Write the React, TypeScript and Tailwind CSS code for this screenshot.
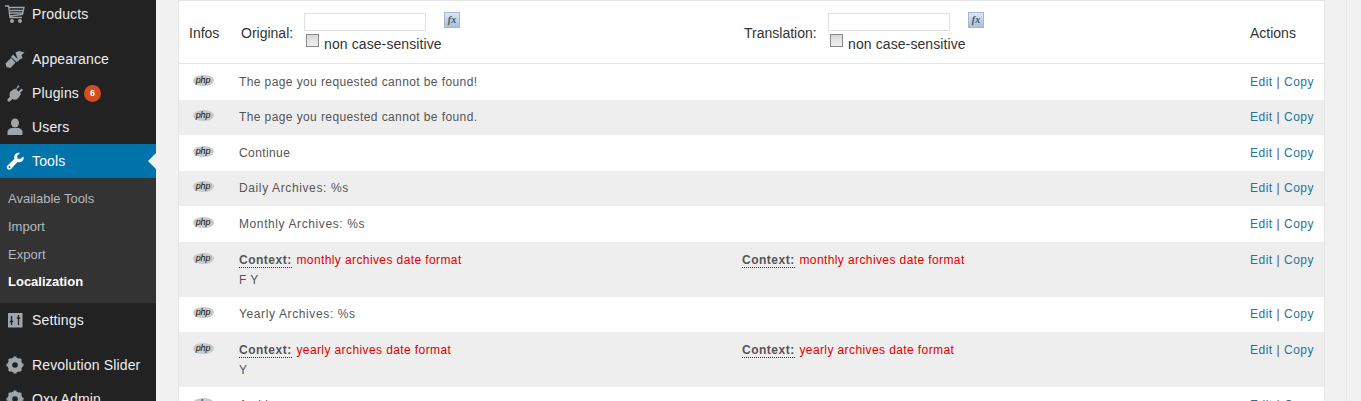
import type { FC, ReactNode } from "react";

const Php: FC = () => (
  <span className="flex justify-center items-center bg-[#c9c9c9] mt-[1px] rounded-[50%] w-[21px] h-[11px] font-['Liberation_Sans'] font-normal text-[#111] text-[9px] italic leading-none tracking-[-0.2px]">
    php
  </span>
);

const Fx: FC = () => (
  <span className="flex justify-center items-center bg-gradient-to-b from-[#dbe6f2] to-[#a9c0da] border border-[#a5b8cf] w-4 h-4 font-['Liberation_Serif'] font-bold text-[#44546a] text-[10px] italic leading-none">
    fx
  </span>
);

const CartIcon = () => (
  <svg viewBox="0 0 20 20" className="w-5 h-5" fill="none" stroke="#a0a5aa" strokeWidth="1.3">
    <path d="M0 2h3.500l1.500 11.500h12M4 3.500h15l-1.500 7L5 12M5 6.500h13M5 9h12.500" />
    <circle cx="7" cy="17" r="1.300" fill="#a0a5aa" />
    <circle cx="15" cy="17" r="1.300" fill="#a0a5aa" />
  </svg>
);

const BrushIcon = () => (
  <svg viewBox="0 0 20 20" className="w-5 h-5" fill="#a0a5aa">
    <path d="M10.500 3.500l3.500-1.500 5.500 1.500-3 2.500 1 3-4.500 2.500zM8 5.500l6 6-2.500 1.500L6 8zM6 9l4.500 4.500-5 5.500-4-1-1-3.500z" />
  </svg>
);

const PlugIcon = () => (
  <svg viewBox="0 0 20 20" className="w-5 h-5" fill="#a0a5aa">
    <path d="M13 2l1.500 1.500-3 3 2 2 3-3L18 7l-3 3 1 1-3 4.500c-2 1.500-4 1.500-5.500.5L4 19l-2-2 3-3.500c-1-1.500-.5-3.500 .5-5L10 5.500l1 1z" />
  </svg>
);

const UserIcon = () => (
  <svg viewBox="0 0 20 20" className="w-5 h-5" fill="#a0a5aa">
    <ellipse cx="10" cy="6" rx="4" ry="4.500" />
    <path d="M2.500 18v-3c0-2.500 3-4 4.500-4h6c1.500 0 4.500 1.500 4.500 4v3z" />
  </svg>
);

const WrenchIcon = () => (
  <svg viewBox="0 0 20 20" className="w-5 h-5" fill="#fff">
    <path d="M18.500 5.500c.5 2-.2 4-1.700 5-1.300.9-3 1-4.300.5L6 18c-1 1-2.500 1-3.500 0s-1-2.500 0-3.500L9.300 8c-.5-1.500-.3-3 .7-4.500 1.200-1.500 3-2 5-1.500l-3 3 .5 2.500 2.500.5zM4.500 15a1 1 0 1 0 0 2 1 1 0 0 0 0-2z" fillRule="evenodd" />
  </svg>
);

const SlidersIcon = () => (
  <svg viewBox="0 0 20 20" className="w-5 h-5">
    <rect x="3" y="3" width="14.500" height="14.500" fill="#a0a5aa" />
    <path d="M6.500 6v9M4.800 11.500h3.400M13.500 5v10M11.800 8h3.400" stroke="#222" strokeWidth="1.300" />
  </svg>
);

const GearIcon = () => (
  <svg viewBox="0 0 20 20" className="w-5 h-5">
    <circle cx="10" cy="10" r="5.500" fill="none" stroke="#a0a5aa" strokeWidth="4" />
    <path d="M10 1.500v17M1.500 10h17M4 4l12 12M16 4L4 16" stroke="#a0a5aa" strokeWidth="3" />
    <circle cx="10" cy="10" r="2.800" fill="#222" />
  </svg>
);

const MenuItem: FC<{ icon: ReactNode; label: string; badge?: string; className?: string }> = ({ icon, label, badge, className }) => (
  <div className={`flex items-center h-[34px] text-[#eee] text-sm tracking-[0.15px] ${className ?? ""}`}>
    <span className="flex justify-center pr-[3px] w-[32px] shrink-0">{icon}</span>
    <span>{label}</span>
    {badge && (
      <span className="flex justify-center items-center bg-[#d54e21] ml-[5px] rounded-full w-[17px] h-[17px] font-bold text-[9px] text-white tracking-normal">{badge}</span>
    )}
  </div>
);

const Sidebar: FC = () => (
  <aside className="bg-[#222] w-[156px] shrink-0">
    <MenuItem icon={<CartIcon />} label="Products" className="-mt-[3px]" />
    <MenuItem icon={<BrushIcon />} label="Appearance" className="mt-[11px]" />
    <MenuItem icon={<PlugIcon />} label="Plugins" badge="6" />
    <MenuItem icon={<UserIcon />} label="Users" />
    <div className="relative">
      <MenuItem icon={<WrenchIcon />} label="Tools" className="bg-[#0073aa] text-white" />
      <span className="top-[9px] right-0 absolute border-y-8 border-y-transparent border-r-8 border-r-[#f1f1f1]" />
    </div>
    <div className="flex flex-col gap-[9px] bg-[#333] pt-[11px] pb-[12px] pl-2 text-[#b4b9be] text-[13px] leading-[19px]">
      <span>Available Tools</span>
      <span>Import</span>
      <span>Export</span>
      <span className="-mt-[1px] font-bold text-white">Localization</span>
    </div>
    <MenuItem icon={<SlidersIcon />} label="Settings" />
    <MenuItem icon={<GearIcon />} label="Revolution Slider" className="mt-[11px]" />
    <MenuItem icon={<GearIcon />} label="Oxy Admin" />
  </aside>
);

const FilterCell: FC<{ label: string; labelWidth: string; className: string }> = ({ label, labelWidth, className }) => (
  <div className={`flex ${className}`}>
    <span className={`mt-[22px] shrink-0 text-[#333] ${labelWidth}`}>{label}</span>
    <div className="pt-[12px]">
      <div className="flex items-start">
        <span className="bg-white border border-[#e0e0e0] w-[122px] h-[18px]" />
        <span className="-mt-[1px] ml-[18px]"><Fx /></span>
      </div>
      <div className="flex items-start mt-[3px] leading-[18px]">
        <span className="bg-gradient-to-b from-[#d8d8d8] to-[#f0f0f0] ml-[2px] border border-[#888] w-[13px] h-[13px]" />
        <span className="mt-[1px] ml-[5px] text-[#333] tracking-[0.1px]">non case-sensitive</span>
      </div>
    </div>
  </div>
);

const Actions: FC = () => (
  <div className="ml-auto pr-[10px] tracking-[0.5px]">
    <a className="text-[#21759b]">Edit</a> <span className="text-[#555]">|</span> <a className="text-[#21759b]">Copy</a>
  </div>
);

const Context: FC<{ text: string; value: string }> = ({ text, value }) => (
  <div>
    <div className="h-[20px]">
      <span className="border-[#333] border-b border-dotted font-bold text-[#555] tracking-[0.5px]">Context:</span>{" "}
      <span className="ml-[1px] text-[#d00]">{text}</span>
    </div>
    <div className="text-[#555]">{value}</div>
  </div>
);

const Row: FC<{ odd?: boolean; h: string; children: ReactNode }> = ({ odd, h, children }) => (
  <div className={`flex items-start tracking-[0.4px] ${h} ${odd ? "bg-[#eee]" : "bg-white"}`}>
    <span className="flex justify-center pr-[2px] w-[50px] shrink-0"><Php /></span>
    <div className="flex-1 pl-[10px] text-[#555]">{children}</div>
    <Actions />
  </div>
);

const App: FC = () => (
  <div className="flex bg-[#f1f1f1] w-[1361px] h-[401px] overflow-hidden font-['Liberation_Sans',sans-serif] text-xs">
    <Sidebar />
    <main className="ml-[22px] w-[1147px] shrink-0">
      <div className="bg-white border border-[#e5e5e5] border-b-0">
        <div className="flex border-[#e5e5e5] border-b h-[63px] text-sm">
          <span className="mt-[22px] ml-[10px] w-[52px] text-[#333]">Infos</span>
          <FilterCell label="Original:" labelWidth="w-[63px]" className="w-[503px]" />
          <FilterCell label="Translation:" labelWidth="w-[84px]" className="w-[506px]" />
          <span className="mt-[22px] text-[#333]">Actions</span>
        </div>
        <Row h="h-[36px] pt-[10px]">The page you requested cannot be found!</Row>
        <Row h="h-[35px] pt-[9px]" odd>The page you requested cannot be found.</Row>
        <Row h="h-[36px] pt-[10px]">Continue</Row>
        <Row h="h-[35px] pt-[9px]" odd><span className="tracking-[0.62px]">Daily Archives: %s</span></Row>
        <Row h="h-[36px] pt-[10px]"><span className="tracking-[0.6px]">Monthly Archives: %s</span></Row>
        <Row h="h-[55px] pt-[10px]" odd>
          <div className="flex">
            <div className="w-[503px]"><Context text="monthly archives date format" value="F Y" /></div>
            <Context text="monthly archives date format" value="" />
          </div>
        </Row>
        <Row h="h-[35px] pt-[9px]"><span className="tracking-[0.62px]">Yearly Archives: %s</span></Row>
        <Row h="h-[55px] pt-[10px]" odd>
          <div className="flex">
            <div className="w-[503px]"><Context text="yearly archives date format" value="Y" /></div>
            <Context text="yearly archives date format" value="" />
          </div>
        </Row>
        <Row h="h-[36px] pt-[10px]">Archives</Row>
      </div>
    </main>
    <div className="ml-[21px] border-[#e8e8e8] border-l" />
  </div>
);

export default App;
